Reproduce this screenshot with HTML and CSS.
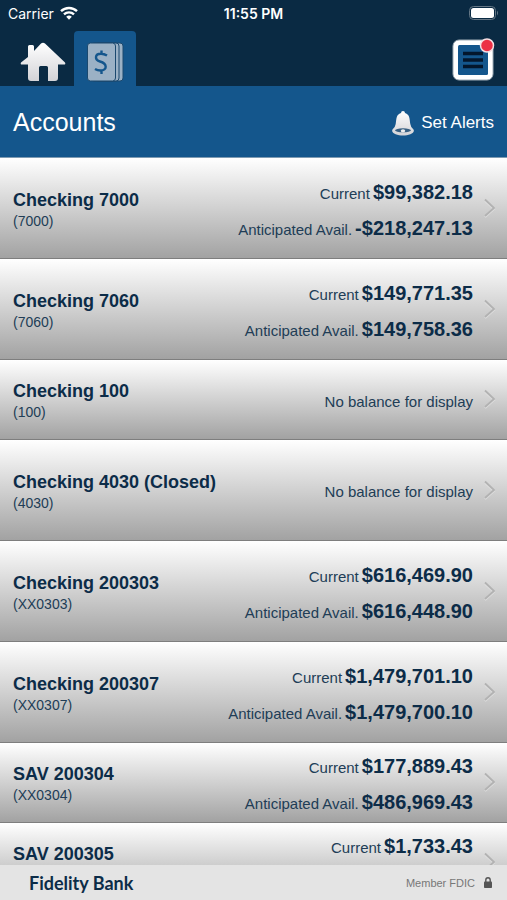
FILE: index.html
```html
<!DOCTYPE html>
<html lang="en">
<head>
    <meta charset="UTF-8">
    <meta name="viewport" content="width=device-width, initial-scale=1">
    <title>Accounts</title>
    <link rel="stylesheet" href="styles.css">
</head>
<body>
    <svg width="0" height="0" class="icon-defs">
        <defs>
            <linearGradient id="silver" x1="0" y1="0" x2="0" y2="1">
                <stop offset="0" stop-color="#ffffff"/>
                <stop offset="1" stop-color="#d3d3d7"/>
            </linearGradient>
            <symbol id="chevron" viewBox="0 0 12 20">
                <path d="M1 3 L10 11 L1 19" fill="none" stroke="#dedede" stroke-width="2"/>
                <path d="M1 1.5 L10 10 L1 18" fill="none" stroke="#b2b2b2" stroke-width="1.8"/>
            </symbol>
        </defs>
    </svg>
    <header class="top-bar">
        <div class="status-bar">
            <div class="carrier">
                <span>Carrier</span>
                <svg width="18" height="14" viewBox="0 0 18 14">
                    <g fill="none" stroke="#fff" stroke-width="2.4">
                        <path d="M1 5.2 A11.5 11.5 0 0 1 17 5.2"/>
                        <path d="M4 8.4 A7.2 7.2 0 0 1 14 8.4"/>
                    </g>
                    <path d="M6.2 10.8 A4 4 0 0 1 11.8 10.8 L9 13.8 Z" fill="#fff"/>
                </svg>
            </div>
            <div class="clock">11:55 PM</div>
            <div class="battery">
                <svg width="30" height="14" viewBox="0 0 30 14">
                    <rect x="0.5" y="0.5" width="26" height="13" rx="4" fill="none" stroke="#647685"/>
                    <rect x="2" y="2" width="23" height="10" rx="2.5" fill="#fff"/>
                    <path d="M28 4.5 Q30 7 28 9.5 Z" fill="#647685"/>
                </svg>
            </div>
        </div>
        <nav class="tabs">
            <a href="#" class="tab" aria-label="Home">
                <svg width="46" height="40" viewBox="0 0 46 40">
                    <path d="M8 15 V4.5 Q8 3 9.5 3 H12.5 Q14 3 14 4.5 V9 L21 1.5 Q23 0 25 1.5 L45 20.5 Q46 22.5 44 22.5 H38 V36 Q38 39 35 39 H28 V25.5 Q28 24 26.5 24 H20.5 Q19 24 19 25.5 V39 H11 Q8 39 8 36 V22.5 H2 Q0 22.5 1 20.5 Z" fill="url(#silver)"/>
                </svg>
            </a>
            <a href="#" class="tab active" aria-label="Accounts">
                <svg width="37" height="40" viewBox="0 0 37 40">
                    <g fill="#9bb1c5" stroke="#1b496f">
                        <rect x="8" y="1" width="28" height="38" rx="3"/>
                        <rect x="4" y="1" width="28" height="38" rx="3"/>
                        <rect x="0.5" y="1" width="28" height="38" rx="3"/>
                    </g>
                    <path d="M20 13.5 Q17 11.7 14 11.7 C7.5 11.7 7.5 18 13 19.5 C20.5 21.5 20.5 28.5 13.5 28.5 Q10.5 28.5 8 27 M14.5 8.5 V12 M14.5 28 V32" fill="none" stroke="#14568c" stroke-width="2.4"/>
                </svg>
            </a>
            <button class="menu-button" type="button" aria-label="Menu">
                <svg width="44" height="46" viewBox="0 0 44 46">
                    <rect x="2" y="4" width="40" height="40" rx="6" fill="#fff" stroke="#9eacb7"/>
                    <rect x="7" y="9" width="30" height="30" rx="1.5" fill="#14568c"/>
                    <path d="M12 17.5 H32 M12 24 H32 M12 30.5 H32" stroke="#03162c" stroke-width="3.5"/>
                    <circle cx="36" cy="9.500" r="6.500" fill="#ec2f45" stroke="#f5dfe3" stroke-width="1.5"/>
                </svg>
            </button>
        </nav>
    </header>
    <div class="title-bar">
        <h1>Accounts</h1>
        <button class="alerts-button" type="button">
            <svg width="24" height="26" viewBox="0 0 24 26">
                <path d="M12 1 Q14 1 14 3 C19 4.5 18.5 9 19.3 14 Q19.8 17.5 22.5 19.5 C24.5 23 18 25.5 12 25.5 C6 25.5 -0.5 23 1.5 19.5 Q4.2 17.5 4.7 14 C5.5 9 5 4.5 10 3 Q10 1 12 1 Z" fill="url(#silver)"/>
                <ellipse cx="12" cy="20.3" rx="8" ry="2" fill="#375f82"/>
                <ellipse cx="12" cy="20.7" rx="2.2" ry="1.5" fill="#eee"/>
            </svg>
            <span>Set Alerts</span>
        </button>
    </div>
    <main class="account-list">
        <a href="#" class="account">
            <div class="account-info">
                <div class="account-name">Checking 7000</div>
                <div class="account-number">(7000)</div>
            </div>
            <div class="balances">
                <div class="balance">Current <strong>$99,382.18</strong></div>
                <div class="balance">Anticipated Avail. <strong>-$218,247.13</strong></div>
            </div>
            <svg class="chevron"><use href="#chevron"/></svg>
        </a>
        <a href="#" class="account">
            <div class="account-info">
                <div class="account-name">Checking 7060</div>
                <div class="account-number">(7060)</div>
            </div>
            <div class="balances">
                <div class="balance">Current <strong>$149,771.35</strong></div>
                <div class="balance">Anticipated Avail. <strong>$149,758.36</strong></div>
            </div>
            <svg class="chevron"><use href="#chevron"/></svg>
        </a>
        <a href="#" class="account compact">
            <div class="account-info">
                <div class="account-name">Checking 100</div>
                <div class="account-number">(100)</div>
            </div>
            <div class="no-balance">No balance for display</div>
            <svg class="chevron"><use href="#chevron"/></svg>
        </a>
        <a href="#" class="account">
            <div class="account-info">
                <div class="account-name">Checking 4030 (Closed)</div>
                <div class="account-number">(4030)</div>
            </div>
            <div class="no-balance">No balance for display</div>
            <svg class="chevron"><use href="#chevron"/></svg>
        </a>
        <a href="#" class="account">
            <div class="account-info">
                <div class="account-name">Checking 200303</div>
                <div class="account-number">(XX0303)</div>
            </div>
            <div class="balances">
                <div class="balance">Current <strong>$616,469.90</strong></div>
                <div class="balance">Anticipated Avail. <strong>$616,448.90</strong></div>
            </div>
            <svg class="chevron"><use href="#chevron"/></svg>
        </a>
        <a href="#" class="account">
            <div class="account-info">
                <div class="account-name">Checking 200307</div>
                <div class="account-number">(XX0307)</div>
            </div>
            <div class="balances">
                <div class="balance">Current <strong>$1,479,701.10</strong></div>
                <div class="balance">Anticipated Avail. <strong>$1,479,700.10</strong></div>
            </div>
            <svg class="chevron"><use href="#chevron"/></svg>
        </a>
        <a href="#" class="account compact">
            <div class="account-info">
                <div class="account-name">SAV 200304</div>
                <div class="account-number">(XX0304)</div>
            </div>
            <div class="balances">
                <div class="balance">Current <strong>$177,889.43</strong></div>
                <div class="balance">Anticipated Avail. <strong>$486,969.43</strong></div>
            </div>
            <svg class="chevron"><use href="#chevron"/></svg>
        </a>
        <a href="#" class="account compact">
            <div class="account-info">
                <div class="account-name">SAV 200305</div>
            </div>
            <div class="balances">
                <div class="balance">Current <strong>$1,733.43</strong></div>
            </div>
            <svg class="chevron"><use href="#chevron"/></svg>
        </a>
    </main>
    <footer class="footer">
        <div class="bank-name">Fidelity Bank</div>
        <div class="member">
            <span>Member FDIC</span>
            <svg width="8" height="11" viewBox="0 0 8 11">
                <rect x="0" y="4.5" width="8" height="6.5" rx="0.8" fill="#555"/>
                <path d="M1.8 5 V3 A2.2 2.2 0 0 1 6.2 3 V5" fill="none" stroke="#555" stroke-width="1.4"/>
            </svg>
        </div>
    </footer>
</body>
</html>
```
FILE: styles.css
```css
* {
    box-sizing: border-box;
}
body {
    margin: 0;
    height: 100vh;
    display: flex;
    flex-direction: column;
    overflow: hidden;
    font-family: "Liberation Sans", Arial, sans-serif;
    color: #0c2c48;
}
svg {
    display: block;
    flex: none;
}
button {
    padding: 0;
    border: 0;
    background: none;
    font-family: inherit;
    cursor: pointer;
}
.icon-defs {
    position: absolute;
}
.top-bar {
    flex: none;
    background-color: #0a2a43;
    color: #fff;
}
.status-bar {
    display: grid;
    grid-template-columns: 1fr auto 1fr;
    align-items: center;
    height: 28px;
    padding: 0 8px 2px;
    font-family: Inter, sans-serif;
    font-size: 14px;
}
.carrier {
    display: flex;
    align-items: center;
    gap: 6px;
}
.clock {
    font-weight: 600;
}
.battery {
    justify-self: end;
}
.tabs {
    display: flex;
    height: 58px;
    padding: 3px 12px 0 12px;
}
.tab {
    display: flex;
    align-items: center;
    justify-content: center;
    width: 62px;
    padding-top: 6px;
}
.tab.active {
    background-color: #14568c;
    border-radius: 4px 4px 0 0;
}
.menu-button {
    margin-left: auto;
}
.title-bar {
    flex: none;
    display: flex;
    justify-content: space-between;
    align-items: center;
    height: 72px;
    padding: 2px 13px 0;
    background-color: #14568c;
    border-bottom: 1px solid #7f9bb2;
    color: #fff;
}
.title-bar h1 {
    margin: 0;
    font-size: 25px;
    font-weight: normal;
}
.alerts-button {
    display: flex;
    align-items: center;
    gap: 6px;
    font-size: 17px;
    color: #fff;
}
.account-list {
    flex: 1;
    min-height: 0;
    overflow: hidden;
}
.account {
    display: flex;
    align-items: center;
    height: 101px;
    padding: 3px 11px 0 13px;
    background: linear-gradient(#fff, #a2a2a2);
    border-bottom: 1px solid #7e7e7e;
    color: inherit;
    text-decoration: none;
}
/* rows with less vertical padding */
.account.compact {
    height: 80px;
}
.account-info {
    flex: 1;
    min-height: 42px;
}
.account-name {
    font-size: 18px;
    font-weight: bold;
    line-height: 22px;
}
.account-number {
    font-size: 14px;
    line-height: 20px;
    color: #213d56;
}
.balances {
    min-height: 72px;
}
.balance {
    display: flex;
    justify-content: flex-end;
    align-items: baseline;
    gap: 3px;
    height: 36px;
    font-size: 15px;
    line-height: 36px;
    color: #213d56;
}
.balance strong {
    font-size: 20px;
    color: #0c2c48;
}
.no-balance {
    font-size: 15px;
    color: #213d56;
}
.chevron {
    width: 12px;
    height: 20px;
    margin: 0 0 4px 11px;
}
.footer {
    flex: none;
    display: flex;
    justify-content: space-between;
    align-items: center;
    height: 35px;
    padding: 0 15px 0 29px;
    background-color: #e4e4e4;
}
.bank-name {
    font-family: Lato, sans-serif;
    font-size: 18px;
    font-weight: bold;
}
.member {
    display: flex;
    align-items: center;
    gap: 9px;
    font-size: 11px;
    color: #777;
}
```
